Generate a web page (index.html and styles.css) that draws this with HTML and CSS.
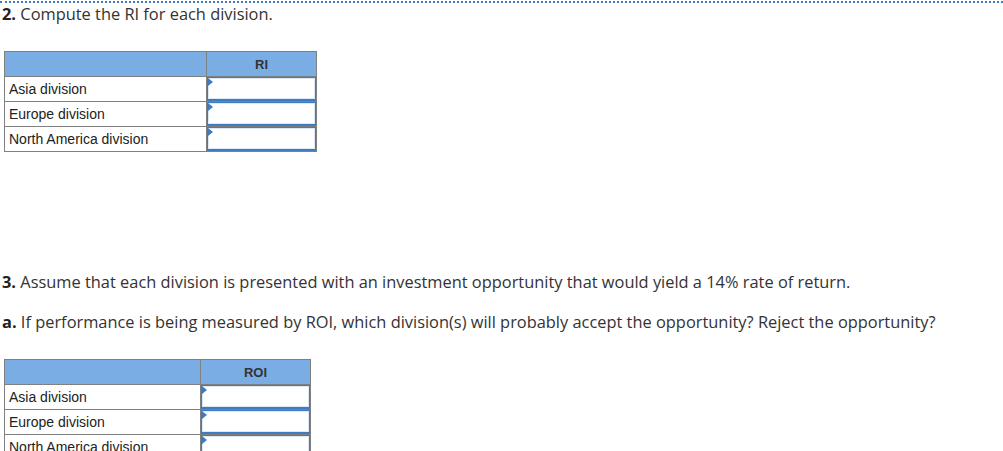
FILE: index.html
```html
<!DOCTYPE html>
<html>
<head>
<meta charset="utf-8">
<link rel="stylesheet" href="styles.css">
</head>
<body>
<div class="page">
  <div class="dots"></div>
  <p class="q q2"><b>2.</b> Compute the RI for each division.</p>
  <table class="grid t1">
    <tr class="head"><th class="lbl"></th><th class="val">RI</th></tr>
    <tr><td class="lbl">Asia division</td><td class="inp"><div class="box"><span class="tri"></span></div></td></tr>
    <tr><td class="lbl">Europe division</td><td class="inp"><div class="box"><span class="tri"></span></div></td></tr>
    <tr><td class="lbl">North America division</td><td class="inp"><div class="box"><span class="tri"></span></div></td></tr>
  </table>
  <p class="q q3"><b>3.</b> Assume that each division is presented with an investment opportunity that would yield a 14% rate of return.</p>
  <p class="q qa"><b>a.</b> If performance is being measured by ROI, which division(s) will probably accept the opportunity? Reject the opportunity?</p>
  <table class="grid t2">
    <tr class="head"><th class="lbl"></th><th class="val">ROI</th></tr>
    <tr><td class="lbl">Asia division</td><td class="inp"><div class="box"><span class="tri"></span></div></td></tr>
    <tr><td class="lbl">Europe division</td><td class="inp"><div class="box"><span class="tri"></span></div></td></tr>
    <tr><td class="lbl">North America division</td><td class="inp"><div class="box"><span class="tri"></span></div></td></tr>
  </table>
</div>
</body>
</html>
```

FILE: styles.css
```css
html, body { margin: 0; padding: 0; background: #fff; }
body { overflow: hidden; }
.page { width: 1003px; height: 451px; overflow: hidden; }
.dots { margin-top: 1px; border-top: 2px dotted #3d7cc0; }
.q { margin: 0; font-family: "Open Sans", Lato, sans-serif; font-size: 16.4px; color: #333; line-height: 20px; padding-left: 2px; }
.q b { font-weight: 700; color: #222; }
.q2 { margin-top: 1px; }
.q3 { margin-top: 120px; }
.qa { margin-top: 20px; }
.grid { border-collapse: collapse; margin-left: 4px; font-family: "Liberation Sans", Arial, sans-serif; font-size: 14px; color: #222; }
.t1 { margin-top: 27px; }
.t2 { margin-top: 27px; }
.grid td, .grid th { border: 1px solid #808080; padding: 0; height: 24px; }
.head th { background: #7aade4; font-weight: 700; font-size: 13px; color: #333; }
.t1 .lbl { width: 201px; }
.t2 .lbl { width: 195px; }
.val { width: 109px; }
td.lbl { padding-left: 4px; box-sizing: border-box; }
.inp { position: relative; }
.box { position: relative; height: 21px; border: 1px solid #3f7bc1; border-bottom-width: 2px; box-shadow: inset 0 0 0 1px #dbe8f7; }
.tri { position: absolute; left: 0; top: 0; width: 0; height: 0; border-top: 4px solid transparent; border-bottom: 4px solid transparent; border-left: 5px solid #3f7bc1; }
```
